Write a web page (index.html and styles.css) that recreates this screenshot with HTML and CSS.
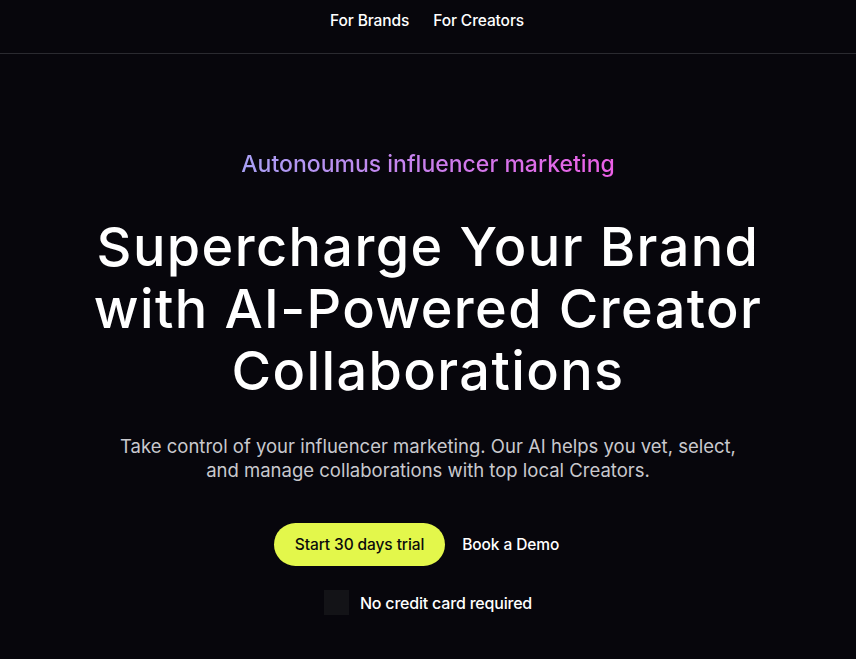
FILE: index.html
```html
<!DOCTYPE html>
<html>
<head>
  <meta name="viewport" content="width=device-width, initial-scale=1">
  <link rel="stylesheet" href="styles.css">
</head>
<body>
  <header class="topbar">
    <nav class="nav">
      <a href="#">For Brands</a>
      <a href="#">For Creators</a>
    </nav>
  </header>
  <main class="hero">
    <p class="tagline">Autonoumus influencer marketing</p>
    <h1>Supercharge Your Brand<br>with AI-Powered Creator<br>Collaborations</h1>
    <p class="lead">Take control of your influencer marketing. Our AI helps you vet, select,<br>and manage collaborations with top local Creators.</p>
    <div class="actions">
      <a class="btn-trial" href="#">Start 30 days trial</a>
      <a class="btn-demo" href="#">Book a Demo</a>
    </div>
    <div class="note">
      <span class="note-icon"></span>
      <span>No credit card required</span>
    </div>
  </main>
</body>
</html>
```

FILE: styles.css
```css
body {
  font-family: Inter, "Noto Sans", sans-serif;
  margin: 0;
  padding: 0;
  background-color: #07060c;
  color: #ffffff;
}
a {
  color: inherit;
  text-decoration: none;
}
.topbar {
  height: 53px;
  border-bottom: 1px solid #2a2a30;
  display: flex;
  justify-content: center;
  align-items: center;
}
.nav {
  display: flex;
  gap: 24px;
  margin-bottom: 12px;
  margin-left: -2px;
  font-size: 15.5px;
  font-weight: 500;
  letter-spacing: -0.1px;
}
.hero {
  display: flex;
  flex-direction: column;
  align-items: center;
  text-align: center;
}
.tagline {
  margin: 96px 0 0;
  font-size: 23px;
  font-weight: 500;
  line-height: 28px;
  background: linear-gradient(90deg, #a8a0f4, #ec5fe6);
  -webkit-background-clip: text;
  background-clip: text;
  color: transparent;
}
h1 {
  margin: 38px 0 0;
  font-size: 54px;
  font-weight: 500;
  line-height: 62px;
  letter-spacing: 1.4px;
}
.lead {
  margin: 32px 0 0;
  font-size: 18.5px;
  line-height: 24px;
  color: #c9c9ce;
}
.actions {
  display: flex;
  align-items: center;
  gap: 17px;
  margin-top: 41px;
  padding-right: 23px;
}
.btn-trial {
  background-color: #e3f74b;
  color: #0b0b0b;
  height: 43px;
  padding: 0 21px;
  border-radius: 22px;
  display: flex;
  align-items: center;
  font-size: 15.5px;
  font-weight: 500;
  letter-spacing: -0.1px;
}
.btn-demo {
  font-size: 15.5px;
  font-weight: 500;
  letter-spacing: -0.1px;
}
.note {
  display: flex;
  align-items: center;
  gap: 11px;
  margin-top: 24px;
  font-size: 16px;
  font-weight: 500;
  letter-spacing: -0.2px;
}
.note-icon {
  width: 25px;
  height: 25px;
  background-color: #131317;
}
```
